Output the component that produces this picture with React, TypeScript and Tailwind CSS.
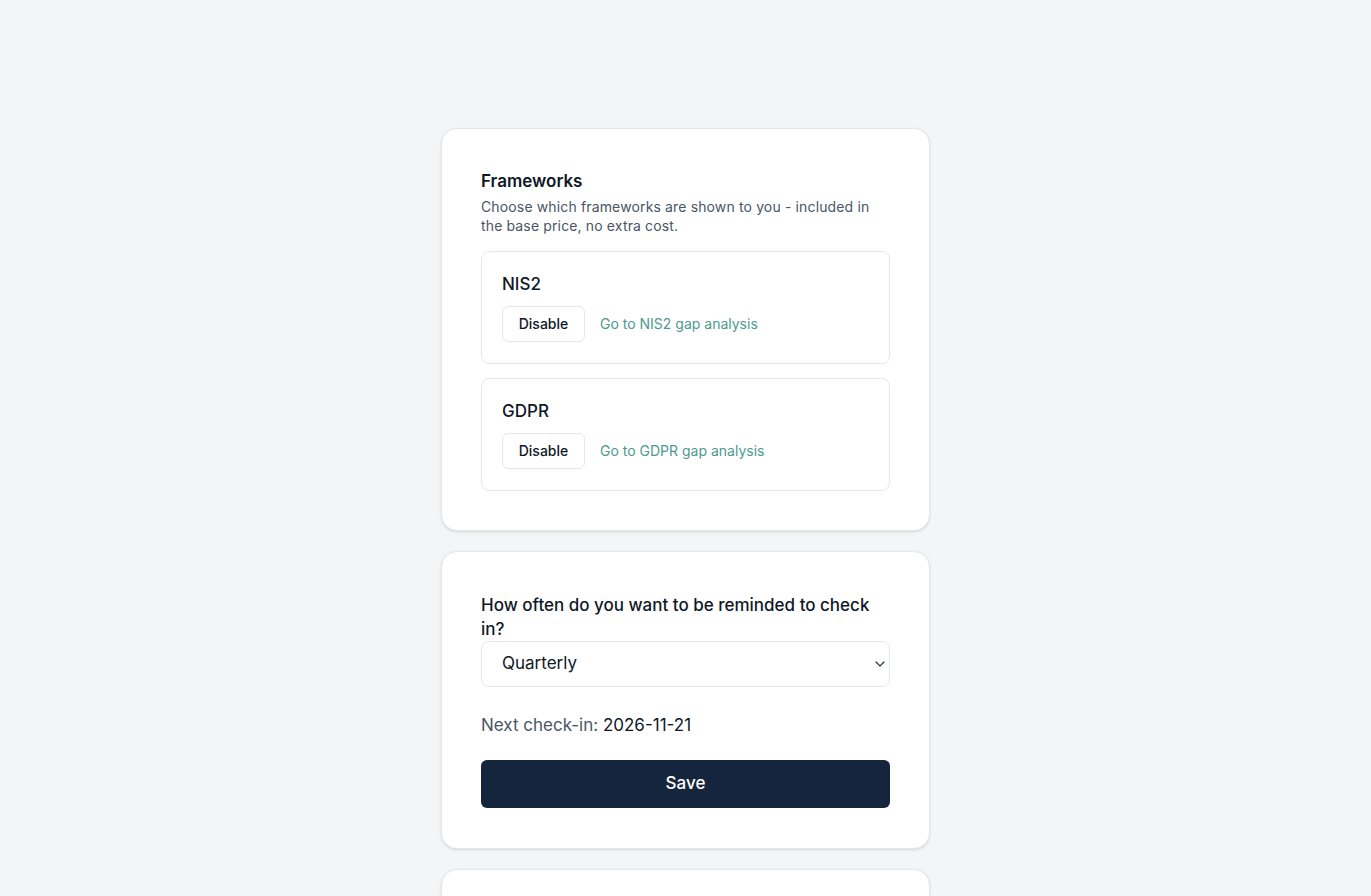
import { ChevronDown } from 'lucide-react';

const frameworks = ['NIS2', 'GDPR'];

function FrameworkRow({ name }: { name: string }) {
  return (
    <div className="rounded-lg border border-gray-200 bg-white px-5 pt-5 pb-[21px]">
      <div className="text-[17px] leading-6 font-medium text-gray-900">{name}</div>
      <div className="mt-[10px] flex items-center gap-[15px]">
        <button
          type="button"
          className="h-9 w-[83px] rounded-md border border-gray-200 bg-white text-sm font-medium text-gray-900"
        >
          Disable
        </button>
        <a href="#" className="text-sm text-[#4d9a8f]">
          Go to {name} gap analysis
        </a>
      </div>
    </div>
  );
}

export default function App() {
  return (
    <div
      className="min-h-screen bg-[#f4f5f7] pt-[128px] pb-10"
      style={{ fontFamily: 'Inter, "Noto Sans", sans-serif' }}
    >
      <div className="w-[489px] flex flex-col gap-5 ml-[441px]">
        {/* Frameworks */}
        <div className="rounded-2xl border border-gray-200 bg-white shadow-sm px-[39px] pt-10 pb-[39px]">
          <h2 className="text-[17px] leading-6 font-semibold text-gray-900">Frameworks</h2>
          <p className="mt-1 text-sm leading-[19px] tracking-[0.01em] text-gray-600">
            Choose which frameworks are shown to you - included in the base price, no extra cost.
          </p>
          <div className="mt-[16px] flex flex-col gap-[14px]">
            {frameworks.map((f) => (
              <FrameworkRow key={f} name={f} />
            ))}
          </div>
        </div>

        {/* Reminder */}
        <div className="rounded-2xl border border-gray-200 bg-white shadow-sm px-[39px] pt-[41px] pb-10">
          <label className="block text-[17px] leading-6 font-medium text-gray-900">
            How often do you want to be reminded to check in?
          </label>
          <div className="relative">
            <select
              defaultValue="Quarterly"
              className="w-full h-[46px] appearance-none rounded-lg border border-gray-200 bg-white pl-5 pr-10 text-[17px] text-gray-900 outline-none"
            >
              <option>Monthly</option>
              <option>Quarterly</option>
              <option>Yearly</option>
            </select>
            <ChevronDown className="absolute right-[2px] top-1/2 -translate-y-1/2 w-4 h-4 text-gray-700" strokeWidth={2} />
          </div>
          <div className="mt-[26px] text-[17px] leading-6 text-gray-600">
            Next check-in: <span className="text-gray-900">2026-11-21</span>
          </div>
          <button
            type="button"
            className="mt-[23px] w-full h-12 rounded-md bg-[#15253d] text-[17px] font-medium text-white"
          >
            Save
          </button>
        </div>

        {/* Next card */}
        <div className="rounded-2xl border border-gray-200 bg-white shadow-sm h-[300px]" />
      </div>
    </div>
  );
}
